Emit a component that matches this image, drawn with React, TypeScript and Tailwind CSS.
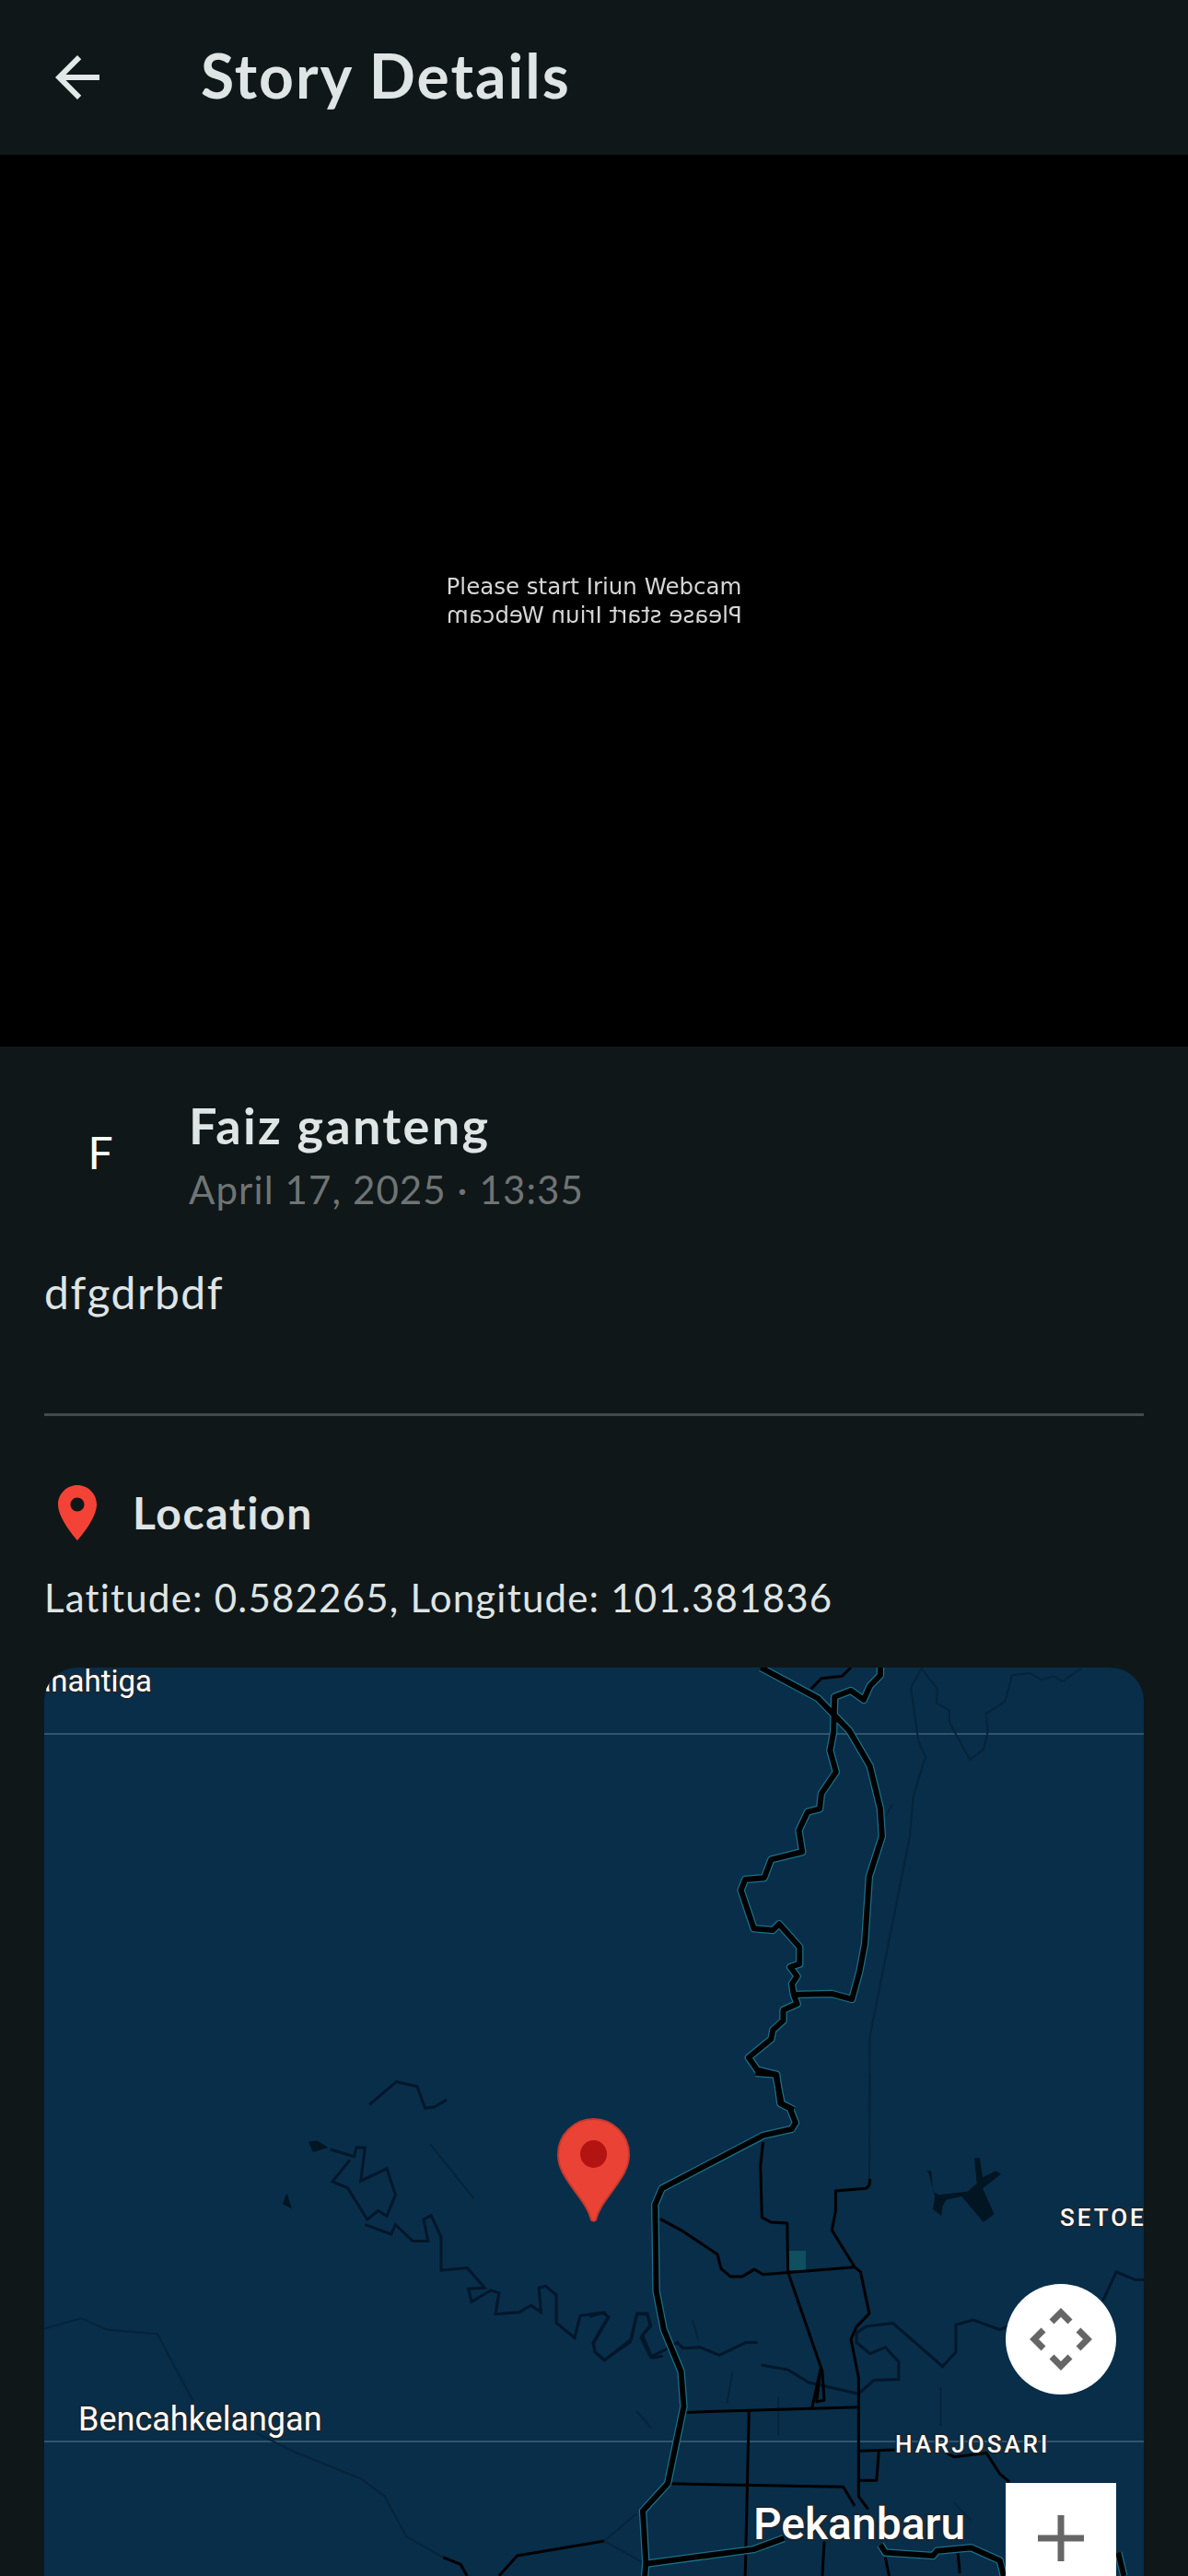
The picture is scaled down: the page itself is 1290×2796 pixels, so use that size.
type Pt = [number, number];

// the map svg uses page coordinates, so the strokes below are traced from three zoomed crops
const fromA = (p: Pt[]) => p.map(([x, y]) => `${(700 + x / 2.657).toFixed(1)},${(1790 + y / 3).toFixed(1)}`).join(' ');
const fromB = (p: Pt[]) => p.map(([x, y]) => `${(640 + x / 2.412).toFixed(1)},${(2250 + y / 2.872).toFixed(1)}`).join(' ');
const fromC = (p: Pt[]) => p.map(([x, y]) => `${(x / 2.119).toFixed(1)},${(2200 + y / 2.631).toFixed(1)}`).join(' ');

const highways = [
  fromA([[335, 60], [500, 160], [590, 265], [650, 380], [680, 520], [685, 610], [648, 740], [635, 960], [620, 1050], [598, 1140], [540, 1122], [430, 1125]]),
  fromA([[680, 60], [680, 85], [650, 120], [632, 165], [595, 135], [548, 155], [545, 270], [535, 330], [552, 400], [510, 470], [505, 520], [470, 530], [445, 590], [455, 660], [365, 685], [345, 745], [290, 750], [278, 785], [315, 910], [370, 915], [388, 895], [447, 970], [447, 1025], [420, 1035], [440, 1065], [425, 1090], [430, 1125], [440, 1155], [400, 1175], [400, 1210], [370, 1240], [365, 1270], [300, 1330], [325, 1370], [378, 1385], [395, 1480], [430, 1500]]),
  fromB([[435, 0], [490, 5], [500, 95], [525, 110], [540, 155], [530, 175], [455, 195], [190, 360], [172, 410], [175, 680], [195, 800], [240, 930], [247, 1040], [205, 1280], [140, 1365], [148, 1530], [430, 1485], [510, 1450]]),
  fromB([[1085, 1568], [1075, 1520], [1000, 1480], [910, 1490], [900, 1505], [775, 1495], [762, 1470]]),
  fromB([[148, 1530], [145, 1568]]),
  fromB([[1385, 1495], [1400, 1568]]),
];

const roads = [
  fromA([[480, 130], [510, 95], [570, 88], [595, 60]]),
  fromB([[455, 215], [448, 290], [452, 450], [475, 465], [518, 468], [520, 620], [610, 930], [615, 1020], [595, 1025], [605, 925], [583, 1045]]),
  fromB([[735, 330], [733, 350], [725, 360], [645, 368], [645, 430], [635, 490], [695, 605], [710, 620], [733, 750], [700, 790], [685, 830], [705, 950], [705, 1320], [730, 1360]]),
  fromB([[185, 455], [240, 490], [335, 565], [345, 610], [370, 635], [400, 635], [432, 612], [455, 628], [695, 605]]),
  fromB([[250, 1058], [705, 1042]]),
  fromB([[418, 1052], [408, 1568]]),
  fromB([[205, 1280], [665, 1290], [695, 1350]]),
  fromB([[705, 1178], [800, 1175]]),
  fromB([[758, 1178], [752, 1270], [705, 1270]]),
  fromB([[930, 1180], [955, 1197], [1040, 1185], [1075, 1250], [1100, 1275]]),
  fromB([[615, 1460], [610, 1568]]),
  fromB([[775, 1510], [785, 1568]]),
  fromB([[965, 1495], [970, 1560]]),
  fromC([[1148, 1568], [1190, 1510], [1390, 1468]]),
  fromC([[1020, 1515], [1060, 1535], [1075, 1568]]),
];

const rivers = [
  fromB([[705, 1000], [745, 958], [810, 955], [810, 900], [775, 855], [735, 875], [700, 840], [700, 810], [725, 790], [795, 780], [925, 915], [960, 870], [960, 785], [1005, 770], [1075, 800], [1095, 790]]),
  fromB([[1345, 710], [1380, 620], [1430, 645], [1452, 645]]),
  fromB([[440, 840], [410, 840], [340, 880], [290, 855], [245, 858], [230, 840], [195, 865], [160, 885], [135, 825], [160, 785], [150, 750], [125, 750], [110, 830], [40, 895], [15, 870], [10, 840], [50, 760], [35, 748], [0, 760]]),
  fromB([[450, 910], [520, 925], [575, 965], [705, 1000]]),
  fromC([[850, 222], [912, 157], [960, 170], [978, 232], [1000, 228], [1028, 208]]),
  fromC([[760, 350], [815, 370], [820, 345], [840, 345], [830, 440], [890, 405], [910, 480], [890, 540], [870, 525], [845, 550], [800, 460], [765, 442], [805, 380]]),
  fromC([[840, 565], [900, 592], [910, 565], [950, 612], [985, 612], [975, 550], [992, 538], [1015, 600], [1015, 695], [1075, 688], [1115, 745], [1078, 748], [1085, 785], [1130, 752], [1148, 760], [1140, 820], [1195, 815], [1222, 795], [1245, 815], [1240, 745], [1255, 740], [1280, 765], [1280, 845], [1322, 888], [1335, 825], [1390, 815], [1400, 830], [1365, 905], [1370, 930], [1390, 952], [1450, 900], [1465, 820], [1490, 820], [1497, 855], [1478, 880], [1500, 945], [1525, 940]]),
];

const faint = [
  fromA([[800, 60], [768, 125], [790, 300], [810, 350], [775, 480], [765, 610], [650, 1260], [648, 1500]]),
  fromA([[800, 65], [845, 130], [842, 175], [880, 200], [880, 240], [938, 360], [978, 325], [990, 270], [985, 210], [1040, 170], [1060, 85], [1110, 78], [1145, 100], [1180, 88], [1205, 105], [1260, 62]]),
  fromA([[695, 545], [715, 505]]),
  fromB([[735, 0], [733, 330]]),
  fromB([[270, 770], [285, 830]]),
  fromB([[375, 930], [360, 1030]]),
  fromB([[495, 1010], [495, 1130]]),
  fromB([[920, 980], [920, 1100]]),
  fromB([[955, 1340], [1000, 1395]]),
  fromC([[990, 335], [1090, 490]]),
  fromC([[102, 862], [187, 832], [247, 865], [362, 877], [445, 1070]]),
  fromC([[590, 1160], [680, 1215], [830, 1290], [885, 1340], [935, 1455], [1020, 1515]]),
  fromC([[1390, 1468], [1480, 1530]]),
  fromC([[1390, 1468], [1465, 1390]]),
  fromC([[1465, 1098], [1498, 1145]]),
];

const lake = fromB([[1008, 265], [1022, 265], [1030, 325], [1065, 305], [1078, 315], [1030, 360], [1060, 440], [1032, 465], [1000, 420], [975, 385], [935, 395], [925, 415], [922, 445], [900, 425], [905, 385], [888, 310], [882, 305], [895, 305], [900, 370], [915, 380], [990, 370], [1015, 345]]);

function MapLines() {
  return (
    <svg viewBox="48 1810 1194 986" className="w-full h-full block">
      <polyline points="48,1882 1242,1882" fill="none" stroke="#5c7a8d" strokeWidth="1" />
      <polyline points="48,2650 1242,2650" fill="none" stroke="#5c7a8d" strokeWidth="1" />
      {faint.map((p, i) => (
        <polyline key={i} points={p} fill="none" stroke="#06243a" strokeWidth="2" />
      ))}
      {rivers.map((p, i) => (
        <polyline key={i} points={p} fill="none" stroke="#02172a" strokeWidth="3" />
      ))}
      <polygon points={lake} fill="#021522" />
      <polygon points={fromC([[710, 328], [730, 325], [755, 345], [720, 358]])} fill="#021522" />
      <polygon points={fromC([[660, 475], [672, 520], [650, 505]])} fill="#021522" />
      <rect x="855" y="2443" width="20" height="21" fill="#0f4f60" />
      {roads.map((p, i) => (
        <polyline key={i} points={p} fill="none" stroke="#000" strokeWidth="3" strokeLinejoin="round" />
      ))}
      {highways.map((p, i) => (
        <polyline key={i} points={p} fill="none" stroke="#1c7189" strokeWidth="8.5" strokeLinejoin="round" />
      ))}
      {highways.map((p, i) => (
        <polyline key={i} points={p} fill="none" stroke="#000" strokeWidth="6" strokeLinejoin="round" />
      ))}
      {/* marker */}
      <path
        d="M644.5 2300c-21 0-38.500 17-38.500 38.500 0 14 7 24 17 38 9 12.500 16 21 19 33 .5 1.500 4.500 1.500 5 0 3-12 10-20.500 19-33 10-14 17-24 17-38 0-21.500-17.500-38.500-38.500-38.500z"
        fill="#ea4335"
        stroke="#c5392b"
        strokeWidth="2"
      />
      <ellipse cx="644.500" cy="2338" rx="14.500" ry="15" fill="#b31412" />
    </svg>
  );
}

const labelClass = "absolute font-['Roboto',sans-serif] text-white whitespace-nowrap [paint-order:stroke] [-webkit-text-stroke:3px_#1f2529]";

export default function App() {
  return (
    <div className="w-full h-[2796px] overflow-hidden bg-[#101719] font-['Lato','Noto_Sans',sans-serif] text-[#dfe4e4]">
      {/* App bar */}
      <header className="h-[168px] flex items-center pl-[48px]">
        <svg viewBox="0 0 24 24" className="w-[72px] h-[72px] fill-[#e3e8e8]">
          <path d="M20 11H7.83l5.59-5.59L12 4l-8 8 8 8 1.41-1.41L7.83 13H20v-2z" />
        </svg>
        <h1 className="ml-[98px] mb-[5px] text-[66px] leading-[80px] font-bold tracking-[2px]">Story Details</h1>
      </header>

      {/* Video */}
      <div className="h-[968px] bg-black flex flex-col items-center justify-center">
        <div className="font-['DejaVu_Sans',sans-serif] text-[24.5px] leading-[31px] text-[#d6d6d6] blur-[0.6px] text-center">
          <div>Please start Iriun Webcam</div>
          <div className="scale-x-[-1]">Please start Iriun Webcam</div>
        </div>
      </div>

      <main className="px-[48px]">
        {/* Author */}
        <div className="flex pt-[54px]">
          <div className="w-[122px] h-[122px] flex items-center justify-center text-white text-[48px]">F</div>
          <div className="ml-[35px]">
            <div className="text-[54px] leading-[64px] font-bold tracking-[2.3px]">Faiz ganteng</div>
            <div className="text-[42px] leading-[74px] text-[#6f7474] tracking-[1.1px]">April 17, 2025 · 13:35</div>
          </div>
        </div>

        <p className="mt-[42px] text-[48px] leading-[66px] tracking-[1.5px]">dfgdrbdf</p>

        <div className="mt-[98px] h-[3px] bg-[#424a4a]" />

        {/* Location */}
        <div className="mt-[69px] flex items-center">
          <svg viewBox="0 0 24 24" className="w-[72px] h-[72px] fill-[#f44336]">
            <path d="M12 2C8.130 2 5 5.130 5 9c0 5.250 7 13 7 13s7-7.750 7-13c0-3.870-3.130-7-7-7zm0 9.500c-1.380 0-2.500-1.120-2.500-2.500s1.120-2.500 2.500-2.500 2.500 1.120 2.500 2.500-1.120 2.500-2.500 2.500z" />
          </svg>
          <span className="ml-[24px] text-[48px] leading-[66px] font-bold tracking-[1.6px]">Location</span>
        </div>

        <p className="mt-[27px] text-[42px] leading-[58px] tracking-[1.2px]">Latitude: 0.582265, Longitude: 101.381836</p>

        {/* Map */}
        <div className="relative mt-[47px] h-[1100px] rounded-t-[36px] overflow-hidden bg-[#082e4a]">
          <div className="h-[986px]">
            <MapLines />
          </div>
          <span className={`${labelClass} right-[1077px] top-[-5px] text-[33px] leading-[40px]`}>Tanahtiga</span>
          <span className={`${labelClass} left-[37px] top-[796px] text-[36px] leading-[40px]`}>Bencahkelangan</span>
          <span className={`${labelClass} left-[1103px] top-[581px] text-[26px] leading-[32px] font-medium tracking-[3px]`}>SETOE</span>
          <span className={`${labelClass} left-[924px] top-[827px] text-[26px] leading-[32px] font-medium tracking-[3px]`}>HARJOSARI</span>
          <span className={`${labelClass} left-[770px] top-[903px] text-[48px] leading-[54px] font-medium`}>Pekanbaru</span>

          <div className="absolute left-[1044px] top-[669px] w-[120px] h-[120px] rounded-full bg-white flex items-center justify-center">
            <svg viewBox="0 0 120 120" className="w-[120px] h-[120px]" fill="none" stroke="#666" strokeWidth="7">
              <path d="M50 41 60 31l10 10" />
              <path d="M50 79 60 89l10-10" />
              <path d="M41 50 31 60l10 10" />
              <path d="M79 50 89 60 79 70" />
            </svg>
          </div>
          <div className="absolute left-[1044px] top-[885px] w-[120px] h-[200px] bg-white">
            <svg viewBox="0 0 120 120" className="w-[120px] h-[120px]" fill="none" stroke="#666" strokeWidth="7">
              <path d="M60 35v50M35 60h50" />
            </svg>
          </div>
        </div>
      </main>
    </div>
  );
}
